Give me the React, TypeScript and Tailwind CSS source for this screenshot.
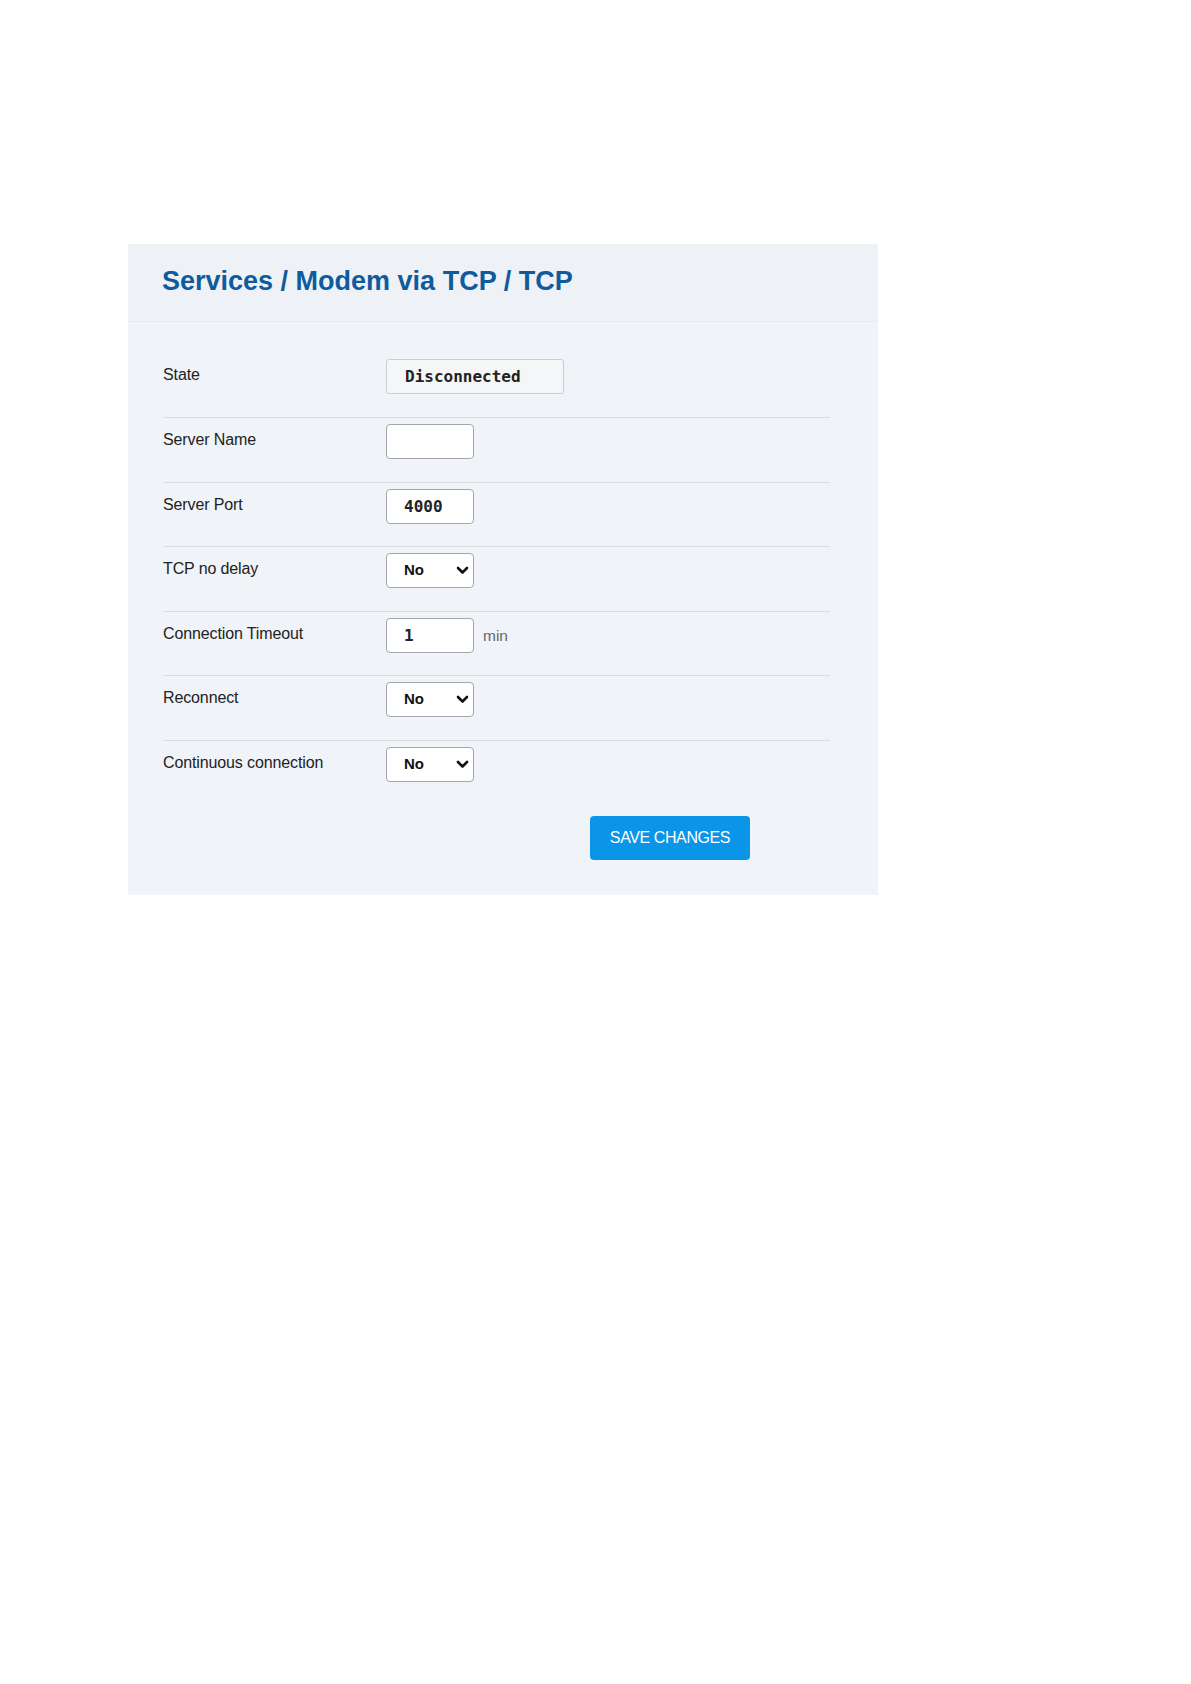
import React from 'react';

const sans = { fontFamily: '"Liberation Sans", Arial, sans-serif' };
const mono = { fontFamily: '"DejaVu Sans Mono", "Liberation Mono", monospace' };

function Chevron() {
  return (
    <svg width="13" height="9" viewBox="0 0 13 9" className="shrink-0">
      <path d="M2 2 L6.5 6.5 L11 2" fill="none" stroke="#111" strokeWidth="2.6" strokeLinecap="round" strokeLinejoin="round" />
    </svg>
  );
}

function SelectBox({ value }: { value: string }) {
  return (
    <div className="flex h-[35px] w-[88px] items-center justify-between rounded-[4px] border border-[#a3a7ad] bg-white pl-[17px] pr-[4px]">
      <span className="text-[15px] font-bold text-[#111]">{value}</span>
      <Chevron />
    </div>
  );
}

function TextBox({ value }: { value: string }) {
  return (
    <input
      defaultValue={value}
      readOnly
      className="h-[35px] w-[88px] rounded-[4px] border border-[#a3a7ad] bg-white px-[17px] text-[16px] font-bold text-[#222] outline-none"
      style={mono}
    />
  );
}

interface RowProps {
  label: string;
  first?: boolean;
  tight?: boolean;
  children: React.ReactNode;
}

function Label({ text }: { text: string }) {
  return <div className="w-[223px] pb-[3px] text-[16px] tracking-[-0.12px] text-[#222]">{text}</div>;
}

function Row({ label, first, tight, children }: RowProps) {
  return (
    <div
      className={`flex items-center pt-[6px] ${tight ? 'pb-[22px]' : 'pb-[23px]'} ${first ? '' : 'border-t border-[#d9dde3]'}`}
    >
      <Label text={label} />
      <div className="flex items-center gap-[9px]">{children}</div>
    </div>
  );
}

export default function App() {
  return (
    <div className="min-h-[1684px] bg-white pl-[128px] pt-[244px]" style={sans}>
      <div className="w-[750px] bg-[#f0f3f8]">
        <div className="h-[78px] border-b border-[#e7eaef] bg-[#eef1f6] pl-[34px] pt-[22px]">
          <h1 className="text-[27px] font-bold leading-[31px] text-[#0f5b9c]">
            Services / Modem via TCP / TCP
          </h1>
        </div>
        <div className="pb-[35px] pl-[35px] pr-[48px] pt-[31px]">
          <Row label="State" first>
            <div
              className="flex h-[35px] w-[178px] items-center rounded-[3px] border border-[#c9ccd1] bg-[#f5f6f8] pl-[18px] text-[16px] font-bold text-[#222]"
              style={mono}
            >
              Disconnected
            </div>
          </Row>
          <Row label="Server Name">
            <TextBox value="" />
          </Row>
          <Row label="Server Port" tight>
            <TextBox value="4000" />
          </Row>
          <Row label="TCP no delay">
            <SelectBox value="No" />
          </Row>
          <Row label="Connection Timeout" tight>
            <TextBox value="1" />
            <span className="text-[15.5px] text-[#666]">min</span>
          </Row>
          <Row label="Reconnect">
            <SelectBox value="No" />
          </Row>
          <div className="flex items-center border-t border-[#d9dde3] pt-[6px]">
            <Label text="Continuous connection" />
            <SelectBox value="No" />
          </div>
          <button className="ml-[427px] mt-[34px] h-[44px] w-[160px] rounded-[4px] bg-[#0a95e9] text-[16px] tracking-[-0.4px] text-white">
            SAVE CHANGES
          </button>
        </div>
      </div>
    </div>
  );
}
